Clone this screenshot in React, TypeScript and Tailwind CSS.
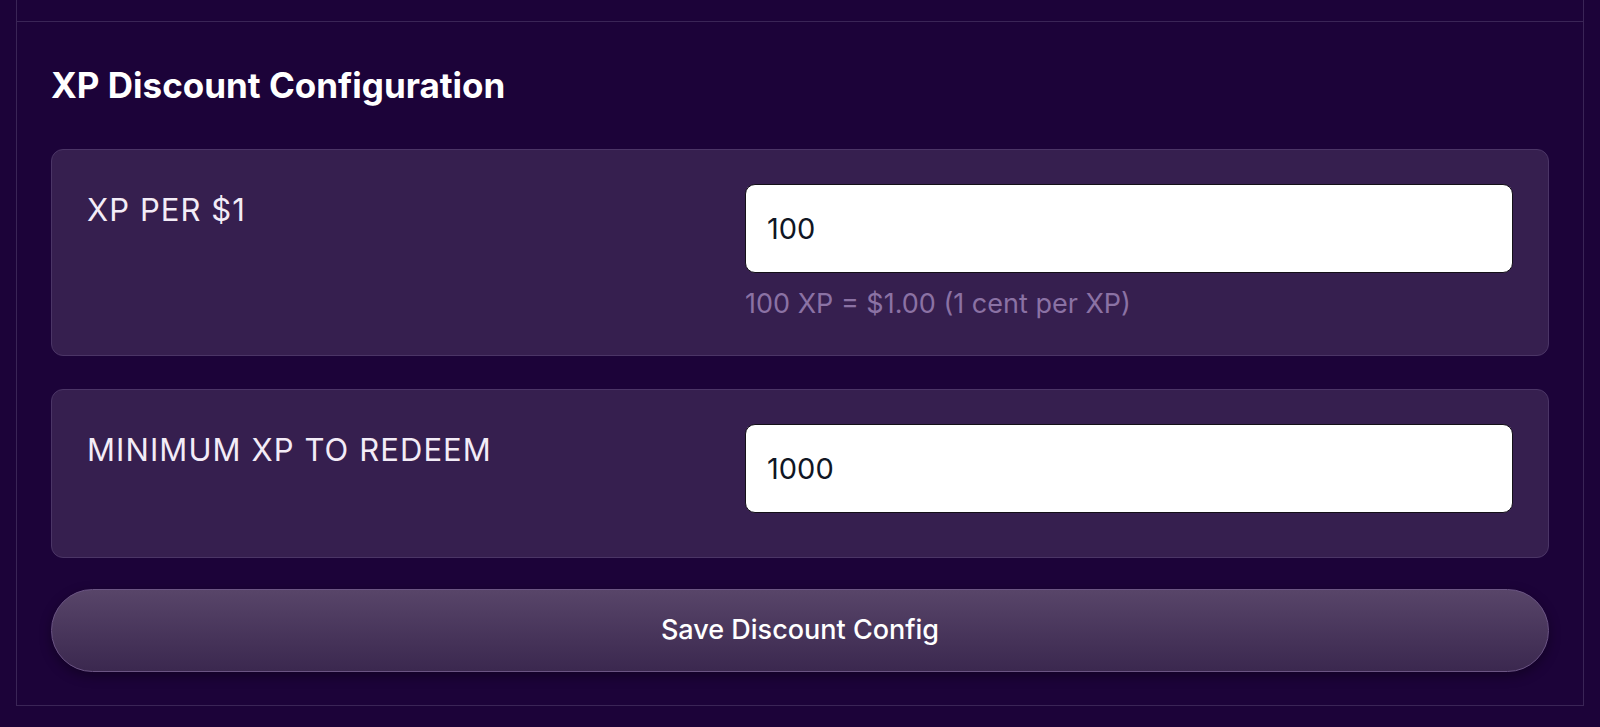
import React from "react";

const font = { fontFamily: "Inter, 'Liberation Sans', sans-serif" };

const Field = ({
  label,
  value,
  hint,
}: {
  label: string;
  value: string;
  hint?: string;
}) => {
  return (
    <div className="grid grid-cols-[658px_1fr] rounded-[12px] border border-[#4b3566] bg-[#361f4f] px-[35px] pt-[34px] pb-[34px]">
      <div className="pt-[7px] text-[31px] leading-[38px] tracking-[0.035em] text-[#f3ecf7]">{label}</div>
      <div className="flex flex-col">
        <input
          defaultValue={value}
          className="h-[89px] w-full rounded-[10px] border-[1.5px] border-[#141018] bg-white px-[21px] text-[29px] text-[#101624] outline-none"
        />
        {hint ? (
          <p className="mt-[14px] text-[27px] leading-[34px] text-[#8b72a4]">{hint}</p>
        ) : (
          <div className="h-[10px]" />
        )}
      </div>
    </div>
  );
};

export default function App() {
  return (
    <div className="h-[727px] w-full overflow-hidden bg-[#1c0339] px-[16px]" style={font}>
      {/* tail of the section above */}
      <div className="h-[21px] border-x border-[#3a2556]" />
      {/* discount config section */}
      <div className="flex flex-col border border-[#3a2556] px-[34px] pt-[42px] pb-[33px]">
        <h2 className="text-[35px] font-bold leading-[42px] text-white">XP Discount Configuration</h2>

        <div className="mt-[43px] flex flex-col gap-[33px]">
          <Field label="XP PER $1" value="100" hint="100 XP = $1.00 (1 cent per XP)" />
          <Field label="MINIMUM XP TO REDEEM" value="1000" />
        </div>

        <button className="mt-[31px] h-[83px] w-full rounded-full border border-[#6b5583] bg-gradient-to-b from-[#584569] to-[#3b284f] text-[27px] font-medium text-white shadow-[0_4px_12px_rgba(0,0,0,0.35)]">
          Save Discount Config
        </button>
      </div>
    </div>
  );
}
